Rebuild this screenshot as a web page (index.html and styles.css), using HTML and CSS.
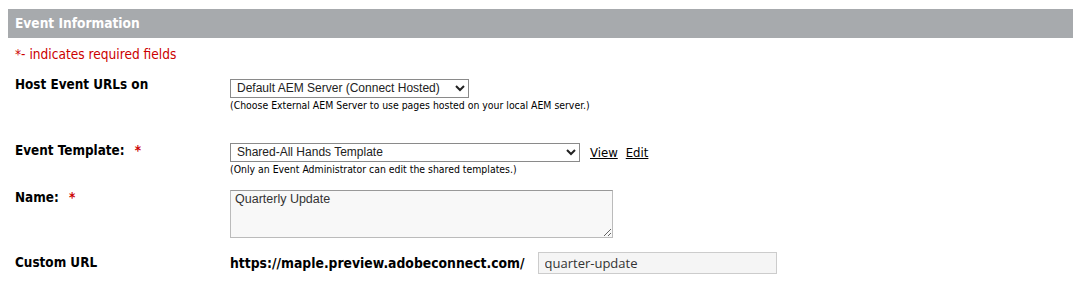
FILE: index.html
```html
<!DOCTYPE html>
<html lang="en">
<head>
    <meta charset="UTF-8">
    <meta name="viewport" content="width=device-width, initial-scale=1.0">
    <title>Event Information</title>
    <link rel="stylesheet" href="styles.css">
</head>
<body>
    <!-- Section Header -->
    <div class="section-header">Event Information</div>

    <div class="form-body">
        <div class="required-note">*- indicates required fields</div>

        <!-- Host URLs -->
        <div class="form-row row-host">
            <div class="form-label">Host Event URLs on</div>
            <div class="form-field">
                <select class="field-select select-host">
                    <option>Default AEM Server (Connect Hosted)</option>
                    <option>External AEM Server</option>
                </select>
                <div class="field-hint">(Choose External AEM Server to use pages hosted on your local AEM server.)</div>
            </div>
        </div>

        <!-- Template -->
        <div class="form-row row-template">
            <div class="form-label">Event Template: <span class="req">*</span></div>
            <div class="form-field">
                <div class="inline-group">
                    <select class="field-select select-template">
                        <option>Shared-All Hands Template</option>
                    </select>
                    <a class="field-link" href="#">View</a>
                    <a class="field-link" href="#">Edit</a>
                </div>
                <div class="field-hint">(Only an Event Administrator can edit the shared templates.)</div>
            </div>
        </div>

        <!-- Name -->
        <div class="form-row row-name">
            <div class="form-label">Name: <span class="req">*</span></div>
            <div class="form-field">
                <textarea class="field-textarea">Quarterly Update</textarea>
            </div>
        </div>

        <!-- Custom URL -->
        <div class="form-row row-url">
            <div class="form-label">Custom URL</div>
            <div class="form-field inline-group">
                <span class="url-prefix">https://maple.preview.adobeconnect.com/</span>
                <input class="field-input" type="text" value="quarter-update">
            </div>
        </div>
    </div>
</body>
</html>
```

FILE: styles.css
```css
html, body {
    margin: 0;
    padding: 0;
    background: #fff;
    font-family: "DejaVu Sans Condensed", "DejaVu Sans", sans-serif;
    color: #000;
}
body {
    padding: 9px 0 0 8px;
}
.section-header {
    width: 1065px;
    height: 29px;
    line-height: 29px;
    background: #a7aaad;
    color: #fff;
    font-size: 13.6px;
    font-weight: bold;
    padding-left: 7px;
    box-sizing: border-box;
}
.form-body {
    padding-left: 7px;
}
.required-note {
    color: #cc0000;
    font-size: 13.6px;
    margin-top: 8px;
    line-height: 16px;
}
.form-row {
    display: grid;
    grid-template-columns: 215px 1fr;
    align-items: start;
}
.form-label {
    font-size: 13.4px;
    font-weight: bold;
    line-height: 16px;
}
.req {
    color: #cc0000;
    margin-left: 6px;
}
.row-host {
    margin-top: 15px;
}
.row-template {
    margin-top: 31px;
}
.row-name {
    margin-top: 14px;
}
.row-url {
    margin-top: 14px;
    align-items: center;
}
.field-select {
    font-family: "Liberation Sans", Arial, sans-serif;
    font-size: 12px;
    height: 19px;
    border: 1px solid #8a8a8a;
    border-radius: 0;
    background: #fff;
    color: #222;
    padding: 0 0 0 2px;
    margin: 0;
}
.select-host {
    width: 239px;
}
.select-template {
    width: 350px;
}
.field-hint {
    font-size: 10.4px;
    line-height: 13px;
    color: #000;
    margin-top: 1px;
}
.inline-group {
    display: flex;
    align-items: center;
}
.field-link {
    font-size: 13px;
    color: #000;
    text-decoration: underline;
    margin-left: 10px;
}
.field-link + .field-link {
    margin-left: 8px;
}
.field-textarea {
    display: block;
    width: 383px;
    height: 48px;
    box-sizing: border-box;
    border: 1px solid #bbb;
    border-top-color: #999;
    background: #f8f8f8;
    font-family: "Liberation Sans", Arial, sans-serif;
    font-size: 12.5px;
    color: #333;
    padding: 1px 4px;
    margin: 0;
    resize: both;
}
.url-prefix {
    font-size: 13.8px;
    font-weight: bold;
    padding-top: 1px;
}
.field-input {
    width: 239px;
    height: 22px;
    box-sizing: border-box;
    margin: 0 0 0 13px;
    border: 1px solid #ccc;
    background: #f5f5f5;
    font-family: "Open Sans", sans-serif;
    font-size: 13px;
    color: #333;
    padding: 0 6px;
}
```
